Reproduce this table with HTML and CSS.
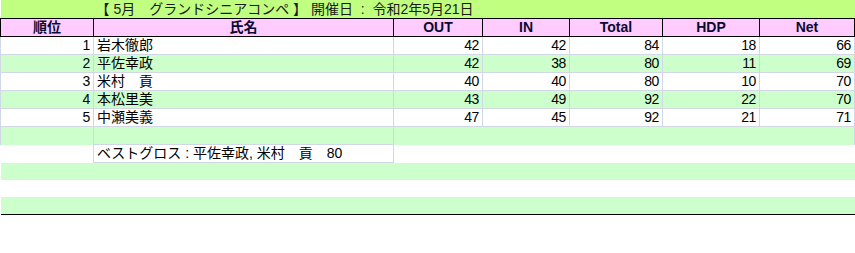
FILE: index.html
```html
<!DOCTYPE html>
<html lang="ja">
<head>
<meta charset="utf-8">
<link rel="stylesheet" href="styles.css">
</head>
<body>
<table class="sheet">
  <colgroup>
    <col class="c-rank"><col class="c-name"><col class="c-out"><col class="c-in"><col class="c-total"><col class="c-hdp"><col class="c-net">
  </colgroup>
  <tr class="title">
    <td></td>
    <td colspan="6">【 5月　グランドシニアコンペ 】 開催日 &nbsp;:&nbsp; 令和2年5月21日</td>
  </tr>
  <tr class="head">
    <th>順位</th><th>氏名</th><th>OUT</th><th>IN</th><th>Total</th><th>HDP</th><th>Net</th>
  </tr>
  <tr class="row w">
    <td class="num">1</td><td class="name">岩木徹郎</td><td class="num">42</td><td class="num">42</td><td class="num">84</td><td class="num">18</td><td class="num">66</td>
  </tr>
  <tr class="row g">
    <td class="num">2</td><td class="name">平佐幸政</td><td class="num">42</td><td class="num">38</td><td class="num">80</td><td class="num">11</td><td class="num">69</td>
  </tr>
  <tr class="row w">
    <td class="num">3</td><td class="name">米村　貢</td><td class="num">40</td><td class="num">40</td><td class="num">80</td><td class="num">10</td><td class="num">70</td>
  </tr>
  <tr class="row g">
    <td class="num">4</td><td class="name">本松里美</td><td class="num">43</td><td class="num">49</td><td class="num">92</td><td class="num">22</td><td class="num">70</td>
  </tr>
  <tr class="row w">
    <td class="num">5</td><td class="name">中瀬美義</td><td class="num">47</td><td class="num">45</td><td class="num">92</td><td class="num">21</td><td class="num">71</td>
  </tr>
  <tr class="extra g">
    <td class="sep"></td><td class="sep"></td><td colspan="5" class="sep"></td>
  </tr>
  <tr class="extra w">
    <td></td><td class="best">ベストグロス : 平佐幸政, 米村　貢　80</td><td colspan="5"></td>
  </tr>
  <tr class="extra g"><td colspan="7"></td></tr>
  <tr class="extra w"><td colspan="7"></td></tr>
  <tr class="extra g last"><td colspan="7"></td></tr>
</table>
</body>
</html>
```
FILE: styles.css
```css
html, body {
  margin: 0;
  padding: 0;
  background: #fff;
}

.sheet {
  border-collapse: collapse;
  table-layout: fixed;
  width: 854px;
  font-family: "Liberation Sans", "Noto Sans CJK JP", sans-serif;
  font-size: 14px;
  color: #000;
}

.c-rank { width: 93px; }
.c-name { width: 300px; }
.c-out { width: 89px; }
.c-in { width: 87px; }
.c-total { width: 93px; }
.c-hdp { width: 97px; }
.c-net { width: 95px; }

.sheet td, .sheet th {
  padding: 0 3px;
  height: 17px;
  line-height: 17px;
  white-space: nowrap;
  overflow: hidden;
}

.title td {
  background: #c0ff80;
  height: 18px;
  padding: 0 2px;
  color: #1a1a1a;
  font-size: 14px;
  line-height: 18px;
}

.head th {
  background: #ffccff;
  border: 1px solid #000;
  font-weight: bold;
  text-align: center;
  color: #0a0a30;
  font-size: 14px;
}

.row td {
  border: 1px solid #d2d7e6;
}

.row.g td, .extra.g td { background: #ccffcc; }
.row.w td, .extra.w td { background: #fff; }

.num {
  text-align: right;
  letter-spacing: -0.4px;
}
.name { text-align: left; }

.extra td.sep {
  border-left: 1px solid #d2d7e6;
  border-right: 1px solid #d2d7e6;
}

.extra td.best {
  border: 1px solid #d2d7e6;
  text-align: left;
}

.extra.last td {
  border-bottom: 1px solid #000;
}
```
